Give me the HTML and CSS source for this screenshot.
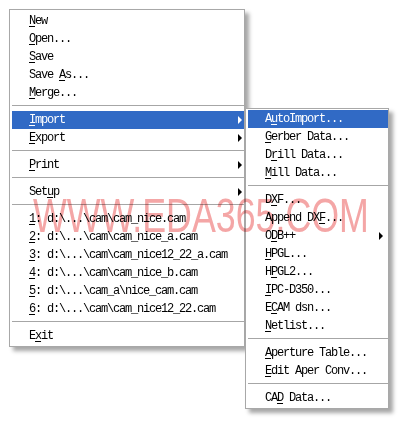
FILE: index.html
```html
<!DOCTYPE html>
<html>
<head>
<meta charset="utf-8">
<link rel="stylesheet" href="styles.css">
</head>
<body>
<div class="screen">
  <div class="menu main">
    <div class="item"><span><u>N</u>ew</span></div>
    <div class="item"><span><u>O</u>pen...</span></div>
    <div class="item"><span><u>S</u>ave</span></div>
    <div class="item"><span>Save <u>A</u>s...</span></div>
    <div class="item"><span><u>M</u>erge...</span></div>
    <div class="sep"></div>
    <div class="item active"><span><u>I</u>mport</span><span class="arrow"></span></div>
    <div class="item"><span><u>E</u>xport</span><span class="arrow"></span></div>
    <div class="sep"></div>
    <div class="item"><span><u>P</u>rint</span><span class="arrow"></span></div>
    <div class="sep"></div>
    <div class="item"><span>Set<u>u</u>p</span><span class="arrow"></span></div>
    <div class="sep"></div>
    <div class="item"><span><u>1</u>: d:\...\cam\cam_nice.cam</span></div>
    <div class="item"><span><u>2</u>: d:\...\cam\cam_nice_a.cam</span></div>
    <div class="item"><span><u>3</u>: d:\...\cam\cam_nice12_22_a.cam</span></div>
    <div class="item"><span><u>4</u>: d:\...\cam\cam_nice_b.cam</span></div>
    <div class="item"><span><u>5</u>: d:\...\cam_a\nice_cam.cam</span></div>
    <div class="item"><span><u>6</u>: d:\...\cam\cam_nice12_22.cam</span></div>
    <div class="sep"></div>
    <div class="item"><span>E<u>x</u>it</span></div>
  </div>

  <div class="menu sub">
    <div class="item active"><span>A<u>u</u>toImport...</span></div>
    <div class="item"><span><u>G</u>erber Data...</span></div>
    <div class="item"><span>D<u>r</u>ill Data...</span></div>
    <div class="item"><span><u>M</u>ill Data...</span></div>
    <div class="sep"></div>
    <div class="item"><span>D<u>X</u>F...</span></div>
    <div class="item"><span>Append DX<u>F</u>...</span></div>
    <div class="item"><span>O<u>D</u>B++</span><span class="arrow"></span></div>
    <div class="item"><span><u>H</u>PGL...</span></div>
    <div class="item"><span>H<u>P</u>GL2...</span></div>
    <div class="item"><span><u>I</u>PC-D350...</span></div>
    <div class="item"><span>E<u>C</u>AM dsn...</span></div>
    <div class="item"><span><u>N</u>etlist...</span></div>
    <div class="sep"></div>
    <div class="item"><span><u>A</u>perture Table...</span></div>
    <div class="item"><span><u>E</u>dit Aper Conv...</span></div>
    <div class="sep"></div>
    <div class="item"><span>CA<u>D</u> Data...</span></div>
  </div>

  <div class="watermark">WWW.EDA365.COM</div>
</div>
</body>
</html>
```

FILE: styles.css
```css
html, body {
  margin: 0;
  padding: 0;
  background: #ffffff;
}

.screen {
  position: relative;
  width: 405px;
  height: 425px;
  overflow: hidden;
  font-family: "Liberation Mono", "DejaVu Sans Mono", monospace;
  font-size: 12px;
  letter-spacing: -1.2px;
  color: #000;
}

.menu {
  box-sizing: border-box;
  background: #ffffff;
  border: 1px solid #a8a8a8;
  box-shadow: 4px 4px 4px rgba(0, 0, 0, 0.35);
  display: flex;
  flex-direction: column;
}

.main {
  margin: 9px 0 0 9px;
  width: 236px;
  padding: 2px 0 1px 2px;
}

.sub {
  position: absolute;
  left: 245px;
  top: 108px;
  width: 144px;
  padding: 1px 0 1px 2px;
}

.item {
  height: 18px;
  line-height: 18px;
  padding-left: 17px;
  display: flex;
  align-items: center;
  justify-content: space-between;
  white-space: nowrap;
}

.main .item {
  padding-right: 2px;
}

.sub .item {
  padding-right: 5px;
}

.item u {
  text-decoration: underline;
  text-underline-offset: 2px;
  text-decoration-thickness: 1px;
}

.item.active {
  background: #316ac5;
  color: #ffffff;
}

.arrow {
  width: 0;
  height: 0;
  border-top: 4px solid transparent;
  border-bottom: 4px solid transparent;
  border-left: 4px solid #000;
}

.item.active .arrow {
  border-left-color: #ffffff;
}

.sep {
  height: 3px;
  border-bottom: 1px solid #a6a6a6;
  margin-bottom: 5px;
}

.watermark {
  position: absolute;
  left: 33px;
  top: 191px;
  font-family: "Liberation Sans", Arial, sans-serif;
  font-size: 49px;
  line-height: 49px;
  letter-spacing: 0;
  white-space: nowrap;
  color: #f4a6a6;
  mix-blend-mode: multiply;
  transform: scaleX(0.73);
  transform-origin: left top;
  pointer-events: none;
}
```
